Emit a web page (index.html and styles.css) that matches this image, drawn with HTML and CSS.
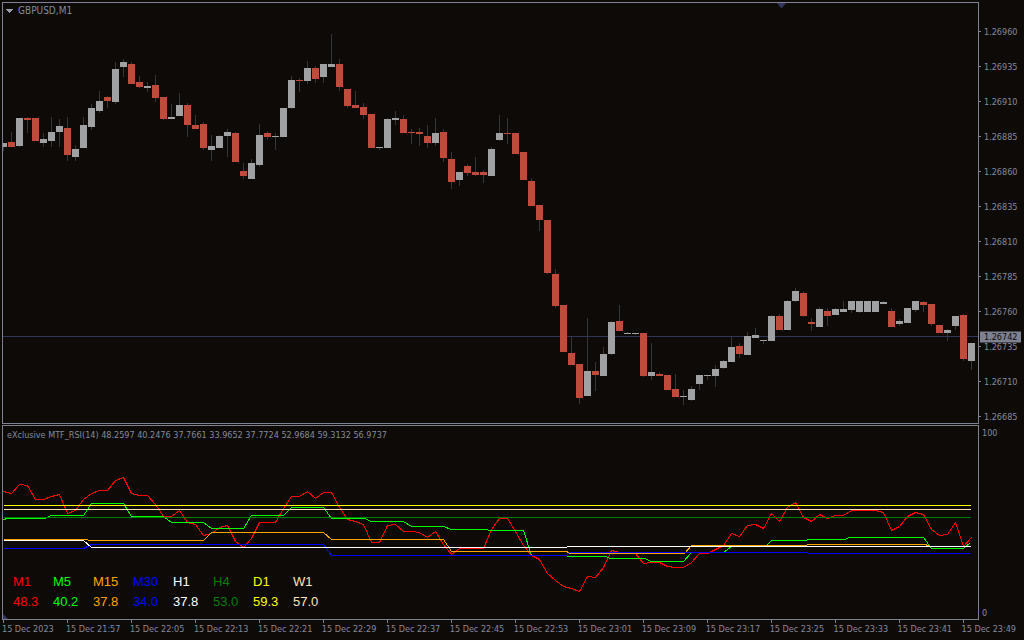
FILE: index.html
```html
<!DOCTYPE html>
<html lang="en">
<head>
<meta charset="utf-8">
<title>GBPUSD,M1</title>
<link rel="stylesheet" href="styles.css">
</head>
<body>
<main class="terminal">
  <section class="panel price-panel" aria-label="Price chart">
    <svg class="plot" id="candles" viewBox="3 3 975 420" preserveAspectRatio="none">
      <path class="price-line" d="M3 336.5H978"/>
      <polygon class="marker" points="777,3 786,3 782,8 781,8"/>
    </svg>
    <header class="symbol">
      <button class="menu" type="button" aria-label="One-click trading">
        <svg class="arrow" viewBox="0 0 7 4"><path d="M0 0H7V1H6V2H5V3H4V4H3V3H2V2H1V1H0Z"/></svg>
      </button>
      <h1 class="symbol-name">GBPUSD,M1</h1>
    </header>
  </section>
  <aside class="price-axis">
    <span class="tick">1.26960</span>
    <span class="tick">1.26935</span>
    <span class="tick">1.26910</span>
    <span class="tick">1.26885</span>
    <span class="tick">1.26860</span>
    <span class="tick">1.26835</span>
    <span class="tick">1.26810</span>
    <span class="tick">1.26785</span>
    <span class="tick">1.26760</span>
    <span class="tick">1.26735</span>
    <span class="tick">1.26710</span>
    <span class="tick">1.26685</span>
    <strong class="current-price">1.26742</strong>
  </aside>

  <section class="panel rsi-panel" aria-label="RSI indicator">
    <svg class="plot" id="rsi" viewBox="3 426 975 193" preserveAspectRatio="none">
      <polygon class="marker" points="3,614 8,619 3,619"/>
    </svg>
    <h2 class="indicator-name">eXclusive MTF_RSI(14) 48.2597 40.2476 37.7661 33.9652 37.7724 52.9684 59.3132 56.9737</h2>
    <dl class="readings">
      <div class="reading m1"><dt>M1</dt><dd>48.3</dd></div>
      <div class="reading m5"><dt>M5</dt><dd>40.2</dd></div>
      <div class="reading m15"><dt>M15</dt><dd>37.8</dd></div>
      <div class="reading m30"><dt>M30</dt><dd>34.0</dd></div>
      <div class="reading h1"><dt>H1</dt><dd>37.8</dd></div>
      <div class="reading h4"><dt>H4</dt><dd>53.0</dd></div>
      <div class="reading d1"><dt>D1</dt><dd>59.3</dd></div>
      <div class="reading w1"><dt>W1</dt><dd>57.0</dd></div>
    </dl>
  </section>
  <aside class="rsi-axis"><span>100</span><span>0</span></aside>

  <footer class="time-axis">
    <time>15 Dec 2023</time>
    <time>15 Dec 21:57</time>
    <time>15 Dec 22:05</time>
    <time>15 Dec 22:13</time>
    <time>15 Dec 22:21</time>
    <time>15 Dec 22:29</time>
    <time>15 Dec 22:37</time>
    <time>15 Dec 22:45</time>
    <time>15 Dec 22:53</time>
    <time>15 Dec 23:01</time>
    <time>15 Dec 23:09</time>
    <time>15 Dec 23:17</time>
    <time>15 Dec 23:25</time>
    <time>15 Dec 23:33</time>
    <time>15 Dec 23:41</time>
    <time>15 Dec 23:49</time>
  </footer>
</main>
<script src="chart.js"></script>
</body>
</html>
```
FILE: styles.css
```css
* { box-sizing: border-box; margin: 0; }

body {
  background: #0e0a07;
  color: #858a9b;
  font: 9px/11px "DejaVu Sans Condensed", "DejaVu Sans", sans-serif;
}

.terminal {
  display: grid;
  grid-template-columns: minmax(0, 1fr) 45px;
  grid-template-rows: minmax(0, 423fr) minmax(0, 195fr) 20px;
  height: 100vh;
  padding: 2px 0 0 2px;
}

.panel { position: relative; border: 1px solid #7d8192; }
.price-panel, .price-axis { margin-bottom: 1px; }
.rsi-panel { display: flex; flex-direction: column; justify-content: space-between; }

.plot { position: absolute; inset: 0; width: 100%; height: 100%; }
.marker { fill: #30355c; }
.price-line { stroke: #30355c; vector-effect: non-scaling-stroke; }
.wick { fill: #34363a; }
.up { fill: #9fa1a2; }
.down { fill: #c14b3a; }
.series { fill: none; stroke: currentColor; shape-rendering: crispEdges; vector-effect: non-scaling-stroke; }

.symbol { position: relative; display: flex; align-items: center; gap: 5px; padding: 2px 3px; }
.menu { display: flex; padding: 0; border: 0; background: none; color: inherit; }
.arrow { width: 7px; height: 4px; fill: #9a9dab; }
.symbol-name { font-size: 10px; line-height: 12px; font-weight: 400; }
.indicator-name { position: relative; padding: 4px; font-size: 9px; font-weight: 400; }

.readings { position: relative; display: flex; padding: 0 10px 7px; font: 13px/20px "Liberation Sans", Arial, sans-serif; }
.reading { width: 40px; }
.reading dd { margin: 0; }

.m1 { color: #ff0000; }
.m5 { color: #00ff00; }
.m15 { color: #ffa500; }
.m30 { color: #0000ff; }
.h1 { color: #ffffff; }
.h4 { color: #008000; }
.d1 { color: #ffff00; }
.w1 { color: #ffe4b5; }

.price-axis { position: relative; display: flex; flex-direction: column; justify-content: space-between; padding: 25px 0 1px; }
.tick { display: flex; align-items: center; gap: 3px; }
.tick::before { content: ""; width: 2px; height: 1px; margin-bottom: 2px; background: #7d8192; }
.current-price {
  position: absolute;
  top: 79.27%;
  left: 1px;
  right: 3px;
  padding-left: 4px;
  transform: translateY(-50%);
  background: #7d8192;
  color: #0e0a07;
  font-weight: 400;
}

.rsi-axis { display: flex; flex-direction: column; justify-content: space-between; padding: 3px 3px 1px; }

.time-axis { grid-column: 1 / -1; display: flex; }
.time-axis time { flex: 0 0 6.26%; white-space: nowrap; }
.time-axis time::before { content: ""; display: block; width: 1px; height: 3px; margin: 0 0 1px 1px; background: #7d8192; }
```
FILE: chart.js
```js
const SVG = "http://www.w3.org/2000/svg";
const STEP = 8;
const FIRST_X = 3;

function add(parent, name, attributes) {
  const node = document.createElementNS(SVG, name);
  for (const key in attributes) node.setAttribute(key, attributes[key]);
  parent.appendChild(node);
}

// Each bar: direction (u/d), then high, body top, body bottom, low.
const bars = `
u143,143,147,151 d132,142,147,147 u118,118,146,147 d117,118,120,133 d118,118,141,141 u133,139,143,147
u117,132,141,147 u119,126,132,147 d117,128,155,161 u145,149,157,161 u117,125,148,148 u104,108,127,130
u91,101,111,113 d96,97,101,108 u62,69,102,104 u59,62,67,77 d62,64,84,84 d76,82,87,88
u82,86,88,92 d75,85,98,102 d97,97,119,120 u104,117,119,119 u93,105,116,116 d103,105,125,137
d115,125,129,129 d122,124,148,150 u135,146,150,161 u135,136,148,148 u129,132,136,157 d132,133,162,162
d163,171,176,179 u159,163,179,179 u124,135,165,167 d131,133,137,140 u133,136,137,150 u108,108,137,137
u76,80,108,109 d78,80,81,92 u61,68,81,84 d66,68,79,83 u64,64,77,83 u34,64,67,67
d59,64,87,91 d89,89,106,108 d91,105,108,108 d103,107,115,119 d114,114,148,148 u147,147,148,150
u118,119,148,148 u111,118,120,125 d115,119,133,133 d129,132,133,144 d128,132,134,146 d125,136,143,148
u118,133,143,146 d129,132,158,162 d152,159,182,189 u172,172,180,186 d164,166,173,176 d157,172,175,176
d170,172,175,183 u147,149,176,176 u115,133,140,141 d118,133,134,144 d133,133,154,154 d152,152,180,180
d178,181,206,206 d205,205,220,231 d220,220,273,274 d269,274,306,308 d305,305,352,352 d337,353,365,365
d364,364,398,404 u318,371,396,396 d362,371,375,391 u347,354,376,376 u321,322,354,355 d305,321,331,331
u332,333,334,334 u333,333,334,335 d333,333,376,377 u343,372,376,380 d372,374,376,376 d375,375,390,390
d374,389,397,397 u390,396,397,405 u386,389,400,401 u375,375,384,390 u375,375,376,380 u365,369,376,387
u360,361,368,369 u337,347,362,362 d343,346,354,358 u332,336,355,355 u328,335,338,338 u340,340,341,344
u315,316,341,341 d314,316,330,330 u300,301,330,330 u288,291,301,302 d291,293,316,317 d318,322,324,331
u307,309,327,327 d308,311,316,326 u308,309,315,315 u301,309,312,312 u301,301,310,313 u301,301,312,313
u301,301,312,312 u301,301,312,312 u301,302,304,304 d308,311,327,327 u319,321,324,326 u308,308,323,323
u301,301,310,312 d301,302,305,312 d304,304,324,326 d325,325,333,333 u329,330,333,341 u316,316,326,330
d314,315,359,361 u343,343,361,370`.trim().split(/\s+/);

const candles = document.getElementById("candles");
bars.forEach((bar, i) => {
  const [high, top, bottom, low] = bar.slice(1).split(",").map(Number);
  const x = FIRST_X + i * STEP;
  add(candles, "rect", { class: "wick", x, y: high, width: 1, height: low - high });
  add(candles, "rect", { class: bar[0] === "u" ? "up" : "down", x: x - 3, y: top, width: 7, height: bottom - top });
});

// The one-minute series has one value for each bar.
const minute = [
  491, 493, 484, 485, 499, 499, 496, 494, 513, 510, 499, 493, 490, 490, 480, 477, 493, 495, 495, 504,
  516, 516, 510, 522, 524, 535, 533, 527, 525, 541, 547, 538, 522, 522, 522, 508, 496, 496, 491, 498,
  492, 492, 507, 519, 521, 524, 542, 542, 525, 524, 531, 531, 532, 537, 531, 544, 554, 548, 548, 548,
  548, 529, 518, 518, 531, 545, 555, 559, 573, 580, 586, 588, 591, 576, 577, 567, 550, 552, 552, 553,
  563, 562, 562, 566, 567, 567, 562, 553, 553, 549, 545, 533, 536, 525, 524, 528, 513, 521, 507, 502,
  517, 521, 514, 518, 515, 515, 510, 510, 510, 510, 512, 530, 526, 516, 512, 514, 529, 535, 534, 522,
  546, 537
].map((y, i) => `${FIRST_X + i * STEP},${y}`).join(" ");

const series = {
  m1: minute,
  m5: "3,519 7,518 45,518 50,515 83,515 91,503 123,503 131,516 163,516 171,522 203,522 211,528 243,528 251,515 283,515 291,507 323,507 331,518 364,518 371,521 403,521 411,526 443,526 451,529 487,529 488,530 523,530 531,555 566,555 567,556 605,556 610,558 644,558 651,561 683,561 691,552 723,552 731,546 765,546 771,540 806,540 807,539 844,539 849,537 923,537 931,548 963,548 970,542",
  m15: "3,539 87,539 88,540 203,540 211,532 323,532 331,539 443,539 451,551 566,551 570,553 684,553 691,545 806,545 807,544 925,544 929,546 970,546",
  m30: "3,548 83,548 91,544 323,544 331,555 566,555 569,552 807,552 808,553 970,553",
  h1: "3,540 83,540 91,547 566,547 567,546 970,546",
  h4: "3,517 970,517",
  d1: "3,505 970,505",
  w1: "3,509 970,509"
};

const rsi = document.getElementById("rsi");
for (const name in series) {
  add(rsi, "polyline", { class: `series ${name}`, points: series[name], transform: "translate(0.5 0.5)" });
}
```
